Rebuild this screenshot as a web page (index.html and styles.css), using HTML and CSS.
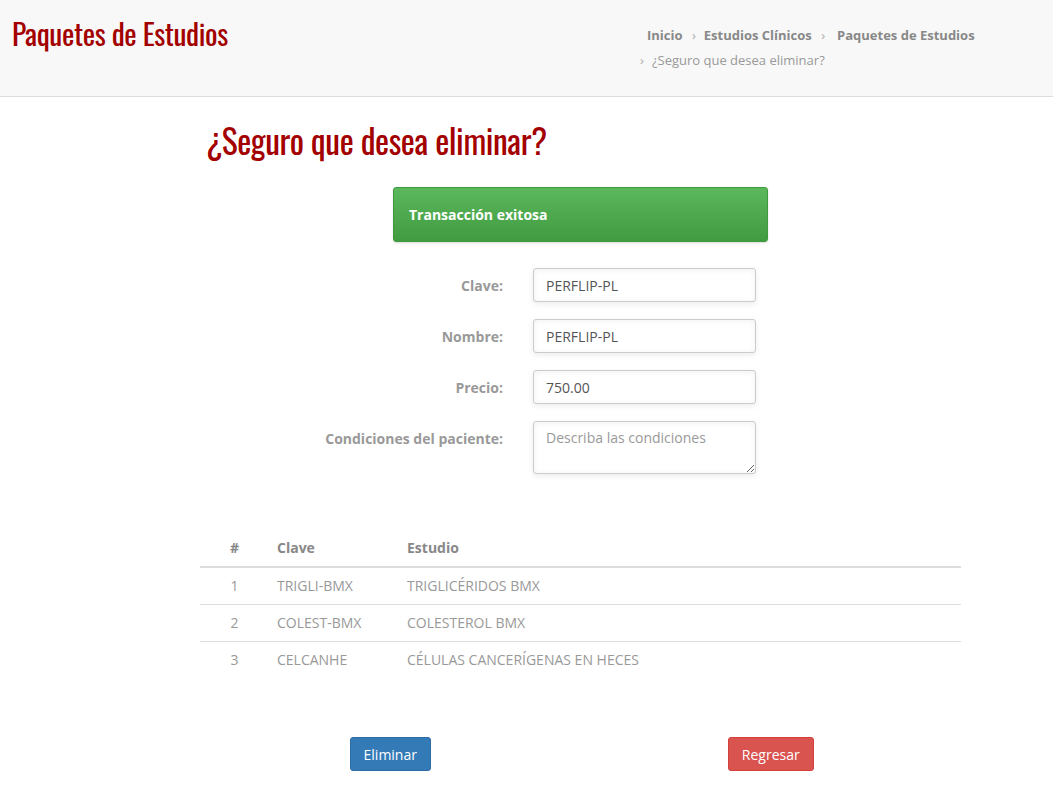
FILE: index.html
```html
<!DOCTYPE html>
<html lang="es">
<head>
  <meta charset="UTF-8">
  <title>Paquetes de Estudios</title>
  <link rel="stylesheet" href="styles.css">
</head>
<body>
  <header class="page-header">
    <h2 class="page-title">Paquetes de Estudios</h2>
    <ol class="breadcrumb">
      <li><a href="#">Inicio</a></li>
      <li><a href="#">Estudios Clínicos</a></li>
      <li><a href="#">Paquetes de Estudios</a></li>
      <li class="active">¿Seguro que desea eliminar?</li>
    </ol>
  </header>

  <main class="container">
    <h1 class="confirm-title">¿Seguro que desea eliminar?</h1>

    <div class="alert-success">Transacción exitosa</div>

    <form class="delete-form">
      <div class="form-row">
        <label for="clave">Clave:</label>
        <input id="clave" type="text" value="PERFLIP-PL">
      </div>
      <div class="form-row">
        <label for="nombre">Nombre:</label>
        <input id="nombre" type="text" value="PERFLIP-PL">
      </div>
      <div class="form-row">
        <label for="precio">Precio:</label>
        <input id="precio" type="text" value="750.00">
      </div>
      <div class="form-row">
        <label for="condiciones">Condiciones del paciente:</label>
        <textarea id="condiciones" placeholder="Describa las condiciones"></textarea>
      </div>
    </form>

    <table class="studies">
      <thead>
        <tr><th>#</th><th>Clave</th><th>Estudio</th></tr>
      </thead>
      <tbody>
        <tr><td>1</td><td>TRIGLI-BMX</td><td>TRIGLICÉRIDOS BMX</td></tr>
        <tr><td>2</td><td>COLEST-BMX</td><td>COLESTEROL BMX</td></tr>
        <tr><td>3</td><td>CELCANHE</td><td>CÉLULAS CANCERÍGENAS EN HECES</td></tr>
      </tbody>
    </table>

    <div class="actions">
      <div><button class="btn btn-primary">Eliminar</button></div>
      <div><button class="btn btn-danger">Regresar</button></div>
    </div>
  </main>
</body>
</html>
```

FILE: styles.css
```css
body {
  margin: 0;
  font-family: "Open Sans", "Noto Sans", sans-serif;
  font-size: 14px;
  color: #999;
  background: #fff;
}

.page-header {
  display: flex;
  justify-content: space-between;
  height: 96px;
  background: #f8f8f8;
  border-bottom: 1px solid #ddd;
}
.page-title {
  margin: 11px 0 0 12px;
  font-family: "Oswald", "DejaVu Sans Condensed", "Liberation Sans Narrow", sans-serif;
  font-weight: normal;
  font-size: 29.5px;
  color: #a30000;
  letter-spacing: -0.4px;
}

.breadcrumb {
  list-style: none;
  margin: 23px 60px 0 0;
  padding: 0;
  width: 353px;
  font-size: 13px;
  line-height: 25px;
}
.breadcrumb li {
  display: inline;
  white-space: nowrap;
}
.breadcrumb li:first-child {
  padding-left: 7px;
}
.breadcrumb li + li::before {
  content: "›";
  padding: 0 8px 0 6px;
  color: #aaa;
  font-weight: normal;
}
.breadcrumb li:nth-child(3)::before {
  padding-right: 12px;
}
.breadcrumb li.active::before {
  padding-left: 0;
}
.breadcrumb a {
  color: #888;
  font-weight: bold;
  text-decoration: none;
}
.breadcrumb .active {
  color: #999;
}

.container {
  width: 761px;
  margin-left: 200px;
}

.confirm-title {
  margin: 22px 0 26px 6px;
  font-family: "Oswald", "DejaVu Sans Condensed", "Liberation Sans Narrow", sans-serif;
  font-weight: normal;
  font-size: 33.5px;
  line-height: 42px;
  color: #a30000;
  letter-spacing: -0.4px;
}

.alert-success {
  width: 343px;
  margin: 0 auto;
  padding: 18px 15px;
  border-radius: 3px;
  border: 1px solid #3d9a3d;
  background: linear-gradient(#5cb85c, #419b41);
  color: #fff;
  font-weight: bold;
  font-size: 14px;
  line-height: 17px;
  box-shadow: 0 1px 2px rgba(0, 0, 0, 0.15);
}

.delete-form {
  margin-top: 26px;
}
.form-row {
  display: flex;
  align-items: flex-start;
  gap: 30px;
  margin-bottom: 17px;
}
.form-row label {
  width: 303px;
  text-align: right;
  font-weight: bold;
  color: #999;
  padding-top: 8px;
  line-height: 20px;
}
.form-row input,
.form-row textarea {
  width: 223px;
  height: 34px;
  box-sizing: border-box;
  padding: 6px 12px;
  border: 1px solid #ccc;
  border-radius: 3px;
  font-family: inherit;
  font-size: 14px;
  color: #555;
  box-shadow: inset 0 1px 6px rgba(0, 0, 0, 0.06), 0 2px 6px rgba(0, 0, 0, 0.08);
  margin: 0;
}
.form-row textarea {
  height: 53px;
  resize: vertical;
}
.form-row textarea::placeholder {
  color: #999;
}

.studies {
  width: 761px;
  margin-top: 56px;
  border-collapse: collapse;
}
.studies th,
.studies td {
  padding: 8px;
  text-align: left;
  line-height: 20px;
}
.studies th {
  color: #888;
  border-bottom: 2px solid #ddd;
  padding-bottom: 8px;
}
.studies td {
  border-top: 1px solid #ddd;
}
.studies tbody tr:first-child td {
  border-top: 0;
}
.studies th:first-child,
.studies td:first-child {
  width: 53px;
  text-align: center;
}
.studies th:nth-child(2) {
  width: 114px;
}

.actions {
  display: grid;
  grid-template-columns: 1fr 1fr;
  margin-top: 59px;
}
.actions div {
  text-align: center;
}
.btn {
  height: 34px;
  padding: 0 13px;
  border-radius: 3px;
  font-family: inherit;
  font-size: 14px;
  color: #fff;
  cursor: pointer;
}
.btn-primary {
  background: #337ab7;
  border: 1px solid #2e6da4;
}
.btn-danger {
  background: #d9534f;
  border: 1px solid #d43f3a;
}
```
